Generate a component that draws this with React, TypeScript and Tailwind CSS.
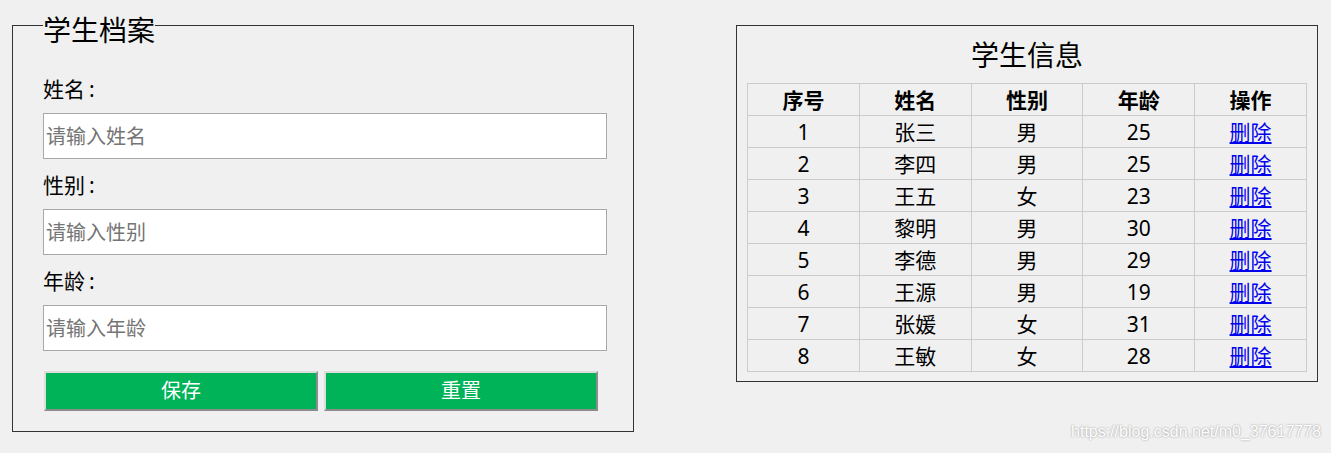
import React from 'react';

const students = [
  { id: 1, name: '张三', sex: '男', age: 25 },
  { id: 2, name: '李四', sex: '男', age: 25 },
  { id: 3, name: '王五', sex: '女', age: 23 },
  { id: 4, name: '黎明', sex: '男', age: 30 },
  { id: 5, name: '李德', sex: '男', age: 29 },
  { id: 6, name: '王源', sex: '男', age: 19 },
  { id: 7, name: '张媛', sex: '女', age: 31 },
  { id: 8, name: '王敏', sex: '女', age: 28 },
];

const fields = [
  { label: '姓名', placeholder: '请输入姓名' },
  { label: '性别', placeholder: '请输入性别' },
  { label: '年龄', placeholder: '请输入年龄' },
];

const cell = 'border border-[#cccccc] h-[32px] p-0 text-center align-middle leading-[30px]';

export default function App() {
  return (
    <div className="relative w-[1331px] h-[453px] bg-[#f0f0f0] font-['Noto_Sans','Noto_Sans_CJK_SC',sans-serif] text-black overflow-hidden">
      <div className="flex items-start pl-[12px] pt-[12px]">
        {/* 学生档案 */}
        <fieldset className="w-[622px] h-[420px] border border-[#333333] m-0 pl-[30px] pr-0 pb-0 pt-0">
          <legend className="p-0 pt-[10px] text-[28px] leading-[16px]">学生档案</legend>
          <div className="flex flex-col pt-[36px]">
            {fields.map((f, i) => (
              <div key={f.label} className={i === 0 ? '' : 'mt-[11px]'}>
                <div className="h-[30px] text-[21px] leading-[30px]">
                  {f.label}
                  <span className="ml-[4px]">:</span>
                </div>
                <input
                  className="mt-[9px] block w-[564px] h-[46px] border border-[#a9a9a9] bg-white px-[2px] text-[20px] outline-none placeholder:text-[#757575]"
                  placeholder={f.placeholder}
                />
              </div>
            ))}
            <div className="flex gap-[6px] mt-[20px] pl-[1px]">
              <button className="w-[274px] h-[40px] bg-[#00b359] border-2 border-t-[#dcdcdc] border-l-[#dcdcdc] border-r-[#8c8c8c] border-b-[#8c8c8c] text-white text-[20px] leading-[34px]">
                保存
              </button>
              <button className="w-[274px] h-[40px] bg-[#00b359] border-2 border-t-[#dcdcdc] border-l-[#dcdcdc] border-r-[#8c8c8c] border-b-[#8c8c8c] text-white text-[20px] leading-[34px]">
                重置
              </button>
            </div>
          </div>
        </fieldset>

        {/* 学生信息 */}
        <div className="ml-[102px] mt-[13px] w-[582px] h-[357px] border border-[#333333] px-[10px]">
          <div className="pt-[9px] h-[49px] text-center text-[28px] leading-[40px]">学生信息</div>
          <table className="mt-[8px] w-[560px] table-fixed border-collapse text-[21px]">
            <thead>
              <tr>
                {['序号', '姓名', '性别', '年龄', '操作'].map((h) => (
                  <th key={h} className={`${cell} font-bold`}>{h}</th>
                ))}
              </tr>
            </thead>
            <tbody>
              {students.map((s) => (
                <tr key={s.id}>
                  <td className={cell}>{s.id}</td>
                  <td className={cell}>{s.name}</td>
                  <td className={cell}>{s.sex}</td>
                  <td className={cell}>{s.age}</td>
                  <td className={cell}>
                    <a href="#" className="text-[#0000ee] underline">删除</a>
                  </td>
                </tr>
              ))}
            </tbody>
          </table>
        </div>
      </div>

      <div className="absolute right-[10px] bottom-[9px] text-[16px] text-white font-['Liberation_Sans',sans-serif] [text-shadow:0_0_2px_#8a8a8a]">
        https://blog.csdn.net/m0_37617778
      </div>
    </div>
  );
}
